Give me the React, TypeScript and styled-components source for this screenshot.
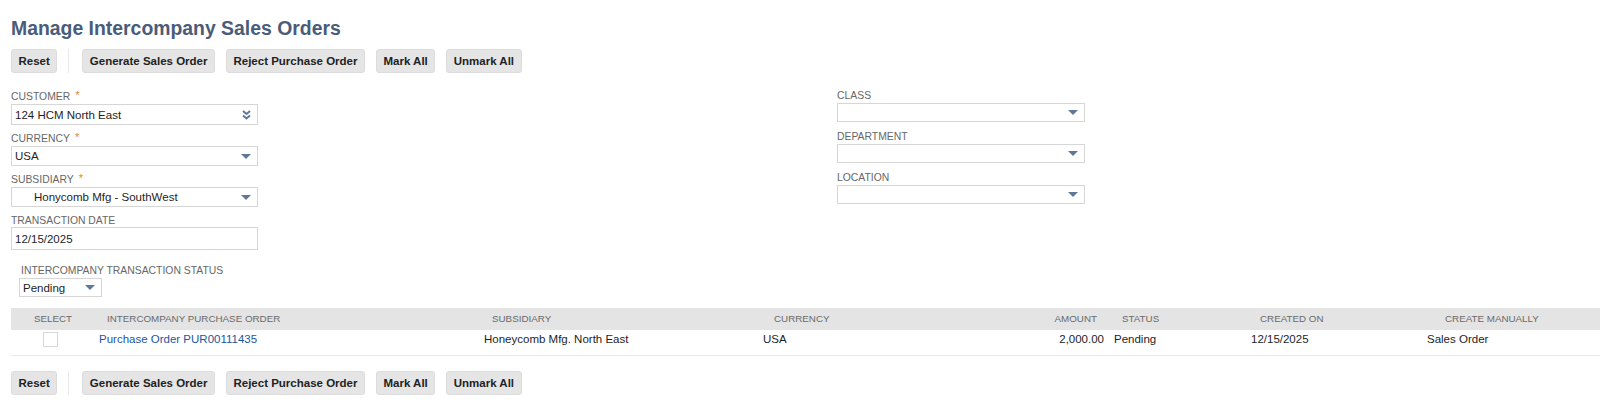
import React from "react";
import styled, { createGlobalStyle } from "styled-components";

const GlobalStyle = createGlobalStyle`
  html, body { margin: 0; padding: 0; background: #ffffff; }
  body {
    font-family: "Liberation Sans", Arial, Helvetica, sans-serif;
    color: #222222;
  }
  * { box-sizing: border-box; }
`;

const Page = styled.div`
  padding: 17px 0 0 11px;
  width: 1600px;
`;

const Title = styled.h1`
  margin: 0;
  font-size: 19.4px;
  line-height: 22px;
  font-weight: 700;
  color: #4a5c79;
`;

const Toolbar = styled.div<{ $top: number }>`
  display: flex;
  align-items: center;
  gap: 11px;
  margin-top: ${(p) => p.$top}px;
  height: 24px;
`;

const Button = styled.button`
  height: 24px;
  padding: 0 6.5px;
  background: #e5e5e5;
  border: 1px solid #dcdcdc;
  border-radius: 3px;
  font-family: inherit;
  font-size: 11.5px;
  font-weight: 700;
  color: #222222;
  white-space: nowrap;
  cursor: pointer;
`;

const Separator = styled.span`
  width: 1px;
  height: 24px;
  background: #e8e8e8;
  margin-right: 2px;
`;

const FormGrid = styled.div`
  display: grid;
  grid-template-columns: 247px 248px;
  column-gap: 579px;
  margin-top: 15px;
  align-items: start;
`;

const Column = styled.div<{ $padTop: number }>`
  display: flex;
  flex-direction: column;
  padding-top: ${(p) => p.$padTop}px;
`;

const Field = styled.div<{ $mb: number }>`
  display: flex;
  flex-direction: column;
  margin-bottom: ${(p) => p.$mb}px;
`;

const Label = styled.div`
  font-size: 10.4px;
  line-height: 13px;
  height: 13px;
  color: #676767;
  text-transform: uppercase;
  white-space: nowrap;
  display: flex;
  align-items: flex-start;
`;

const Required = styled.span`
  color: #e08a1e;
  font-size: 11px;
  margin-left: 5px;
  line-height: 11px;
`;

const InputBox = styled.div<{ $h: number; $gap: number; $w?: number }>`
  display: flex;
  align-items: center;
  justify-content: space-between;
  height: ${(p) => p.$h}px;
  width: ${(p) => (p.$w ? `${p.$w}px` : "100%")};
  margin-top: ${(p) => p.$gap}px;
  border: 1px solid #d6d6d6;
  background: #ffffff;
  padding: 0 6px 0 3px;
`;

const InputText = styled.span<{ $indent?: number }>`
  font-size: 11.5px;
  color: #1e1e1e;
  padding-left: ${(p) => p.$indent ?? 0}px;
  white-space: nowrap;
`;

const StatusBlock = styled.div`
  display: flex;
  flex-direction: column;
  margin: 14px 0 0 8px;
`;

const StatusLabel = styled(Label)`
  padding-left: 2px;
`;

const Table = styled.div`
  margin-top: 11px;
  width: 1589px;
`;

const Grid = styled.div<{ $template: string }>`
  display: grid;
  grid-template-columns: ${(p) => p.$template};
`;

const HeaderRow = styled(Grid)`
  background: #e4e4e4;
  height: 22px;
`;

const BodyRow = styled(Grid)`
  height: 26px;
  border-bottom: 1px solid #e9e9e9;
`;

const HeadCell = styled.div<{ $align: string; $pad: number }>`
  font-size: 9.8px;
  line-height: 22px;
  color: #6a6a6a;
  text-transform: uppercase;
  white-space: nowrap;
  text-align: ${(p) => p.$align};
  padding-left: ${(p) => (p.$align === "left" ? p.$pad : 0)}px;
  padding-right: ${(p) => (p.$align === "right" ? p.$pad : 0)}px;
`;

const Cell = styled.div<{ $align: string; $pad: number }>`
  font-size: 11.5px;
  line-height: 15px;
  padding-top: 2px;
  color: #1e1e1e;
  white-space: nowrap;
  text-align: ${(p) => (p.$align === "right" ? "right" : "left")};
  padding-left: ${(p) => (p.$align !== "right" ? p.$pad : 0)}px;
  padding-right: ${(p) => (p.$align === "right" ? p.$pad : 0)}px;
`;

const Link = styled.a`
  color: #24579b;
  text-decoration: none;
`;

const Checkbox = styled.span`
  display: block;
  width: 15px;
  height: 15px;
  border: 1px solid #d8d8d8;
  background: #ffffff;
`;

const Arrow = () => (
  <svg width="10" height="5" viewBox="0 0 10 5">
    <path d="M0 0 L10 0 L5 5 Z" fill="#5f7899" />
  </svg>
);

const DoubleChevron = () => (
  <svg width="9" height="10" viewBox="0 0 9 10">
    <path d="M1 1 L4.5 4 L8 1" stroke="#5f7899" strokeWidth="2" fill="none" />
    <path d="M1 5.5 L4.5 8.5 L8 5.5" stroke="#5f7899" strokeWidth="2" fill="none" />
  </svg>
);

type Col = {
  label: string;
  width: string;
  align: "left" | "right" | "center";
  headPad: number;
};

const columns: Col[] = [
  { label: "Select", width: "84px", align: "center", headPad: 0 },
  { label: "Intercompany Purchase Order", width: "385px", align: "left", headPad: 12 },
  { label: "Subsidiary", width: "280px", align: "left", headPad: 12 },
  { label: "Currency", width: "280px", align: "left", headPad: 14 },
  { label: "Amount", width: "70px", align: "right", headPad: 13 },
  { label: "Status", width: "137px", align: "left", headPad: 12 },
  { label: "Created On", width: "176px", align: "left", headPad: 13 },
  { label: "Create Manually", width: "1fr", align: "left", headPad: 22 },
];

const template = columns.map((c) => c.width).join(" ");

const rows = [
  {
    po: "Purchase Order PUR00111435",
    subsidiary: "Honeycomb Mfg. North East",
    currency: "USA",
    amount: "2,000.00",
    status: "Pending",
    created: "12/15/2025",
    manual: "Sales Order",
  },
];

const Actions = ({ top }: { top: number }) => (
  <Toolbar $top={top}>
    <Button>Reset</Button>
    <Separator />
    <Button>Generate Sales Order</Button>
    <Button>Reject Purchase Order</Button>
    <Button>Mark All</Button>
    <Button>Unmark All</Button>
  </Toolbar>
);

export default function App() {
  return (
    <>
      <GlobalStyle />
      <Page>
        <Title>Manage Intercompany Sales Orders</Title>
        <Actions top={10} />

        <FormGrid>
          <Column $padTop={2}>
            <Field $mb={7}>
              <Label>
                Customer<Required>*</Required>
              </Label>
              <InputBox $h={21} $gap={1}>
                <InputText>124 HCM North East</InputText>
                <DoubleChevron />
              </InputBox>
            </Field>
            <Field $mb={7}>
              <Label>
                Currency<Required>*</Required>
              </Label>
              <InputBox $h={20} $gap={1}>
                <InputText>USA</InputText>
                <Arrow />
              </InputBox>
            </Field>
            <Field $mb={7}>
              <Label>
                Subsidiary<Required>*</Required>
              </Label>
              <InputBox $h={20} $gap={1}>
                <InputText $indent={19}>Honycomb Mfg - SouthWest</InputText>
                <Arrow />
              </InputBox>
            </Field>
            <Field $mb={0}>
              <Label>Transaction Date</Label>
              <InputBox $h={23} $gap={0}>
                <InputText>12/15/2025</InputText>
              </InputBox>
            </Field>
          </Column>

          <Column $padTop={1}>
            <Field $mb={8}>
              <Label>Class</Label>
              <InputBox $h={19} $gap={1}>
                <InputText />
                <Arrow />
              </InputBox>
            </Field>
            <Field $mb={8}>
              <Label>Department</Label>
              <InputBox $h={19} $gap={1}>
                <InputText />
                <Arrow />
              </InputBox>
            </Field>
            <Field $mb={0}>
              <Label>Location</Label>
              <InputBox $h={19} $gap={1}>
                <InputText />
                <Arrow />
              </InputBox>
            </Field>
          </Column>
        </FormGrid>

        <StatusBlock>
          <StatusLabel>Intercompany Transaction Status</StatusLabel>
          <InputBox $h={19} $gap={1} $w={83}>
            <InputText>Pending</InputText>
            <Arrow />
          </InputBox>
        </StatusBlock>

        <Table>
          <HeaderRow $template={template}>
            {columns.map((c) => (
              <HeadCell key={c.label} $align={c.align} $pad={c.headPad}>
                {c.label}
              </HeadCell>
            ))}
          </HeaderRow>
          {rows.map((r) => (
            <BodyRow key={r.po} $template={template}>
              <Cell $align="left" $pad={32}>
                <Checkbox />
              </Cell>
              <Cell $align="left" $pad={4}>
                <Link href="#">{r.po}</Link>
              </Cell>
              <Cell $align="left" $pad={4}>{r.subsidiary}</Cell>
              <Cell $align="left" $pad={3}>{r.currency}</Cell>
              <Cell $align="right" $pad={6}>{r.amount}</Cell>
              <Cell $align="left" $pad={4}>{r.status}</Cell>
              <Cell $align="left" $pad={4}>{r.created}</Cell>
              <Cell $align="left" $pad={4}>{r.manual}</Cell>
            </BodyRow>
          ))}
        </Table>

        <Actions top={15} />
      </Page>
    </>
  );
}
